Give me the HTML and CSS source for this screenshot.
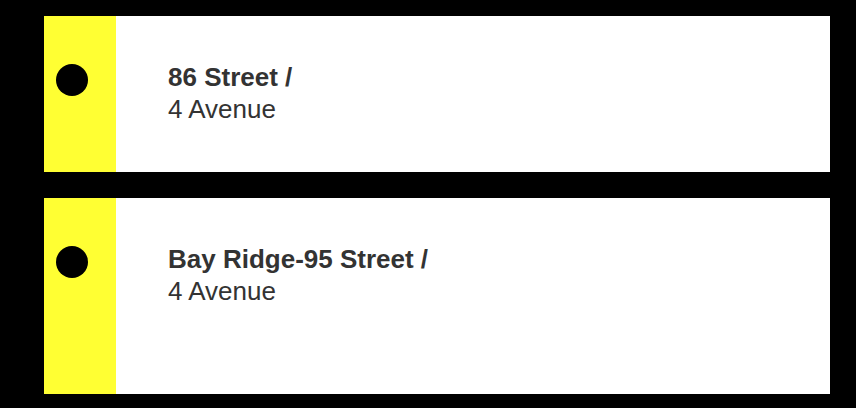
FILE: index.html
```html
<!DOCTYPE html>
<html>
<head>
<meta charset="utf-8">
<link rel="stylesheet" href="styles.css">
</head>
<body>
<div class="list">
  <div class="stop stop-short">
    <div class="line"><span class="dot"></span></div>
    <div class="name"><b>86 Street /</b><br>4 Avenue</div>
  </div>
  <div class="stop stop-tall">
    <div class="line"><span class="dot"></span></div>
    <div class="name"><b>Bay Ridge-95 Street /</b><br>4 Avenue</div>
  </div>
</div>
</body>
</html>
```
FILE: styles.css
```css
html, body {
  margin: 0;
  background: #000;
}
.list {
  width: 786px;
  padding: 16px 0 14px 44px;
  display: flex;
  flex-direction: column;
  gap: 26px;
}
.stop {
  display: flex;
  background: #fff;
}
.stop-short { height: 156px; }
.stop-tall { height: 196px; }
.line {
  width: 72px;
  flex: none;
  background: #ffff33;
  padding: 48px 0 0 12px;
  box-sizing: border-box;
}
.dot {
  display: block;
  width: 32px;
  height: 32px;
  border-radius: 50%;
  background: #000;
}
.name {
  padding: 45px 0 0 52px;
  font-family: "Liberation Sans", Arial, sans-serif;
  font-size: 26px;
  line-height: 32px;
  color: #333;
}
.name b { font-weight: bold; }
```
